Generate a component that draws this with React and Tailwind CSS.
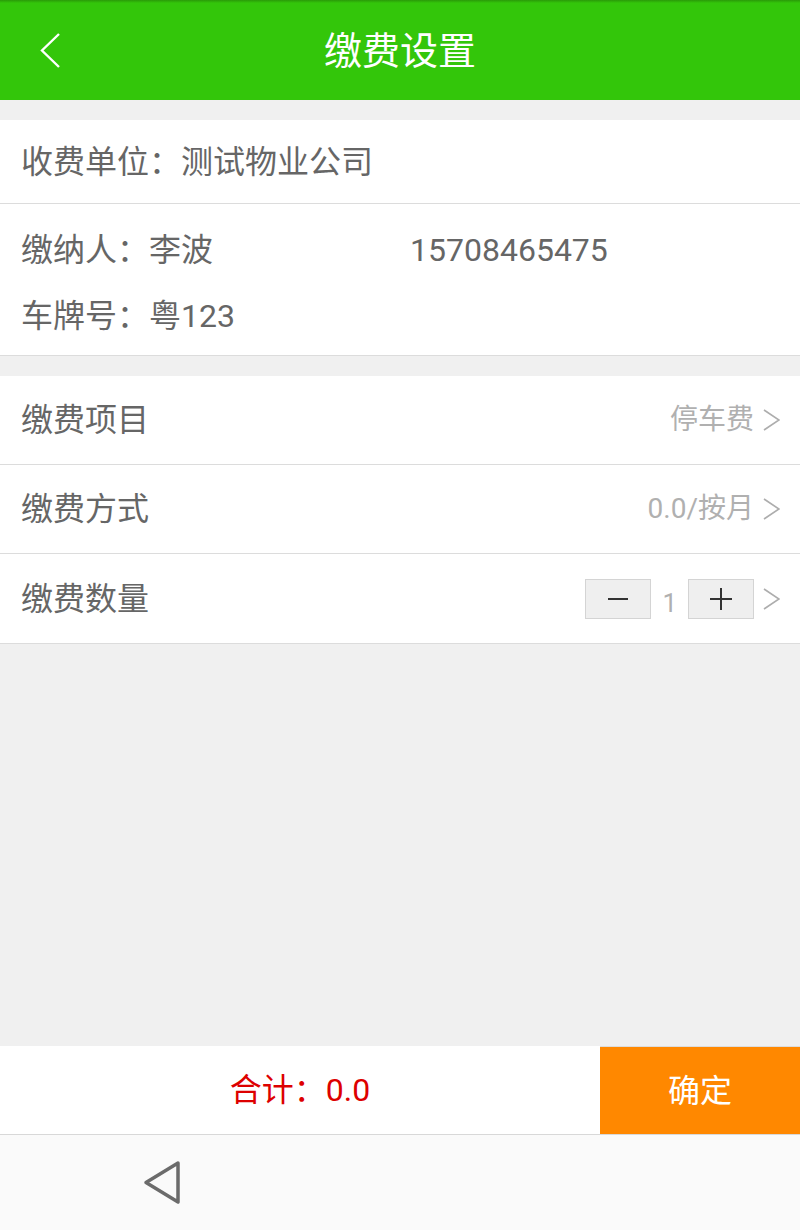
import React from 'react';

const font = { fontFamily: 'Roboto, "Noto Sans CJK SC", sans-serif' };

// Right-pointing chevron used in the list rows
const Arrow = () => (
  <svg className="ml-[9px]" width="17" height="24" viewBox="0 0 17 24" fill="none" stroke="#adadad" strokeWidth="1.6">
    <path d="M1 2 L16 12 L1 22" />
  </svg>
);

const Row = ({ label, children, last }) => (
  <div
    className={`flex h-[89px] items-center justify-between pl-[21px] pr-[20px] ${
      last ? '' : 'border-b border-[#dcdcdc]'
    }`}
  >
    <span className="text-[32px] text-[#666]">{label}</span>
    <div className="flex items-center">{children}</div>
  </div>
);

const StepButton = ({ children }) => (
  <button className="flex h-[40px] w-[66px] items-center justify-center border border-[#d4d4d4] bg-[#efefef]">
    {children}
  </button>
);

const App = () => {
  return (
    <div className="flex h-[1230px] w-[800px] flex-col bg-[#f0f0f0]" style={font}>
      {/* Header */}
      <header className="relative h-[100px] shrink-0 bg-[#33c60a]">
        <div className="h-[3px] bg-gradient-to-b from-[#2a9a08] to-[#33c60a]" />
        <div className="flex h-[97px] items-center justify-center">
          <svg
            className="absolute left-[38px] top-[32px]"
            width="26"
            height="38"
            viewBox="0 0 26 38"
            fill="none"
            stroke="white"
            strokeWidth="2.4"
          >
            <path d="M21 2 L4 18.5 L21 35" />
          </svg>
          <h1 className="text-[38px] text-white">缴费设置</h1>
        </div>
      </header>

      {/* Payer info */}
      <section className="mt-[20px] border-b border-[#dcdcdc] bg-white">
        <div className="flex h-[84px] items-center border-b border-[#dcdcdc] px-[21px] text-[32px] text-[#666]">
          收费单位：测试物业公司
        </div>
        <div className="px-[21px] pb-[17px] pt-[24px] text-[32px] text-[#666]">
          <div className="flex h-[44px] items-center">
            <span className="w-[389px]">缴纳人：李波</span>
            <span>15708465475</span>
          </div>
          <div className="mt-[22px] flex h-[44px] items-center">车牌号：粤123</div>
        </div>
      </section>

      {/* Fee settings */}
      <section className="mt-[20px] border-b border-[#dcdcdc] bg-white">
        <Row label="缴费项目">
          <span className="text-[28px] text-[#b0b0b0]">停车费</span>
          <Arrow />
        </Row>
        <Row label="缴费方式">
          <span className="text-[28px] text-[#b0b0b0]">0.0/按月</span>
          <Arrow />
        </Row>
        <Row label="缴费数量" last>
          <StepButton>
            <span className="block h-[2px] w-[20px] bg-[#333]" />
          </StepButton>
          <span className="mx-[11px] mt-[10px] text-[26px] text-[#b0b0b0]">1</span>
          <StepButton>
            <svg width="22" height="22" viewBox="0 0 22 22" stroke="#333" strokeWidth="2">
              <path d="M11 0 V22 M0 11 H22" />
            </svg>
          </StepButton>
          <Arrow />
        </Row>
      </section>

      <div className="flex-1" />

      {/* Bottom bar */}
      <footer className="flex h-[89px] shrink-0 border-b border-[#d8d8d8] bg-white">
        <div className="flex w-[600px] items-center justify-center text-[32px] text-[#dd0000]">
          合计：0.0
        </div>
        <button className="flex w-[200px] items-center justify-center border-t border-[#dcdcdc] bg-[#ff8800] text-[32px] text-white">
          确定
        </button>
      </footer>

      {/* Android nav bar */}
      <nav className="flex h-[95px] shrink-0 items-center bg-[#fafafa]">
        <svg className="ml-[142px]" width="42" height="46" viewBox="0 0 42 46" fill="none" stroke="#6b6b6b" strokeWidth="3.5" strokeLinejoin="round">
          <path d="M36 3 L4 22.5 L36 42 Z" />
        </svg>
      </nav>
    </div>
  );
};

export default App;
